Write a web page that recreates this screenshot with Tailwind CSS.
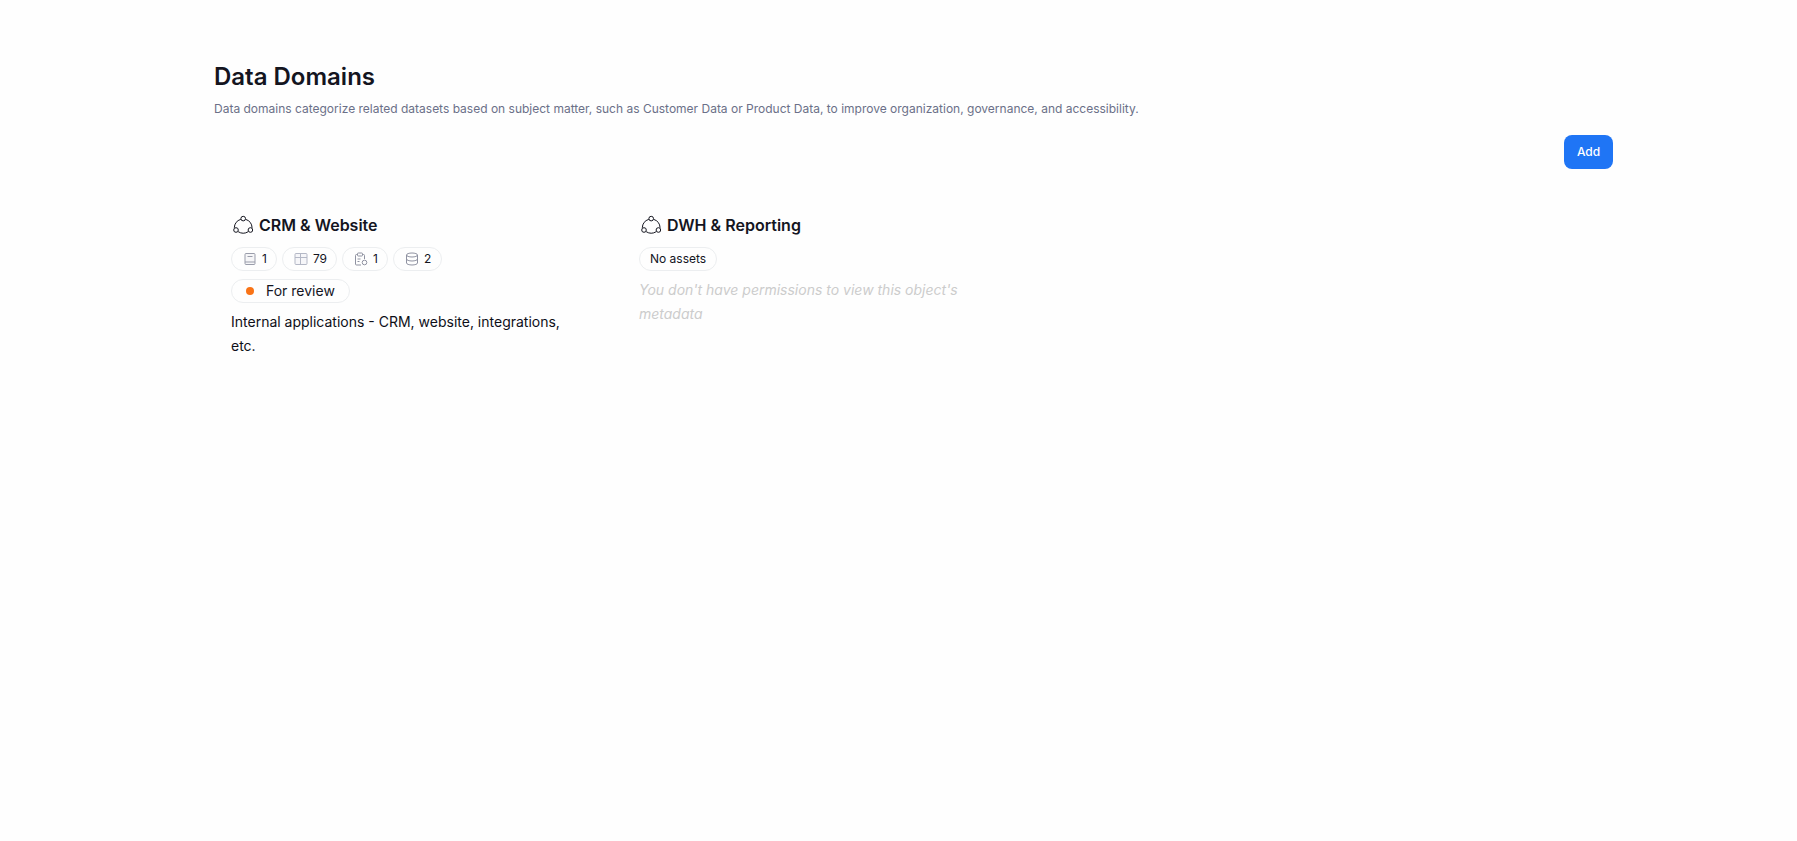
<!DOCTYPE html>
<html lang="en">
<head>
  <meta charset="UTF-8" />
  <title>Data Domains</title>
  <script src="https://cdn.jsdelivr.net/npm/@tailwindcss/browser@4"></script>
</head>
<body class="bg-[#fefefe] font-['Inter',sans-serif] min-h-screen">
  <div class="pl-[214px] pr-[184px] pt-[62px]">
    <h1 class="text-2xl leading-[30px] font-semibold text-[#14151f]">Data Domains</h1>
    <p class="mt-[7px] text-xs leading-[20px] text-[#6b7088]">Data domains categorize related datasets based on subject matter, such as Customer Data or Product Data, to improve organization, governance, and accessibility.</p>
    <div class="flex justify-end mt-[16px]">
      <button class="bg-[#1f75f5] text-white text-xs font-medium h-[34px] w-[49px] rounded-lg">Add</button>
    </div>

    <div class="flex mt-[42px]">
      <!-- CRM & Website -->
      <div class="w-[408px] pl-[17px] pr-[60px] mr-[17px]">
        <div class="flex items-center gap-[6px] h-[28px]">
          <svg class="w-[22px] h-[21px]" viewBox="0 0 22 21" fill="none" stroke="#14151f" stroke-width="1"><circle cx="12.200" cy="3.600" r="2.300"/><circle cx="5" cy="15" r="2.300"/><circle cx="19.400" cy="15" r="2.300"/><path d="M9.800 4.300A9.500 9.500 0 0 0 3.300 12.800M14.600 4.300A9.500 9.500 0 0 1 21.100 12.800M7.200 16.700A9.500 9.500 0 0 0 17.200 16.700"/></svg>
          <span class="text-base font-semibold text-[#14151f]">CRM &amp; Website</span>
        </div>
        <div class="flex gap-[5px] mt-[8px]">
          <span class="flex items-center gap-[5px] h-6 pl-[11px] pr-[9px] rounded-full border border-[#eceef0] text-xs text-[#14151f]">
            <svg class="w-[14px] h-[14px]" viewBox="0 0 14 14" fill="none" stroke="#9a9dab"><rect x="2" y="1.500" width="10" height="11" rx="1" fill="#f6f6f8"/><path d="M2 10h10M4.500 4.500h5"/></svg>1</span>
          <span class="flex items-center gap-[5px] h-6 pl-[11px] pr-[9px] rounded-full border border-[#eceef0] text-xs text-[#14151f]">
            <svg class="w-[14px] h-[14px]" viewBox="0 0 14 14" fill="none" stroke="#b4b8c6"><rect x="1" y="1.500" width="12" height="11" rx="1" fill="#f6f6f9"/><path d="M1 5.500h12M6.500 1.500v11"/></svg>79</span>
          <span class="flex items-center gap-[5px] h-6 pl-[11px] pr-[9px] rounded-full border border-[#eceef0] text-xs text-[#14151f]">
            <svg class="w-[14px] h-[14px]" viewBox="0 0 14 14" fill="none" stroke="#8f92a1"><path d="M3.500 2.500h-1a1 1 0 0 0-1 1v8.500a1 1 0 0 0 1 1H7M8.500 2.500h1a1 1 0 0 1 1 1V7"/><rect x="3.500" y="1" width="5" height="3" rx=".8"/><path d="M3.500 7h3M3.500 9.500h2"/><circle cx="10.500" cy="10.500" r="2.300"/></svg>1</span>
          <span class="flex items-center gap-[5px] h-6 pl-[11px] pr-[10px] rounded-full border border-[#eceef0] text-xs text-[#14151f]">
            <svg class="w-[14px] h-[14px]" viewBox="0 0 14 14" fill="none" stroke="#8f92a1"><ellipse cx="7" cy="3" rx="5.500" ry="2"/><path d="M1.500 3v8c0 1.100 2.500 2 5.500 2s5.500-.9 5.500-2V3M1.500 7c0 1.100 2.500 2 5.500 2s5.500-.9 5.500-2"/></svg>2</span>
        </div>
        <div class="mt-2 flex items-center gap-[12px] w-fit h-6 pl-[14px] pr-[14px] rounded-full border border-[#eceef0] text-sm text-[#14151f]">
          <span class="w-2 h-2 rounded-full bg-[#f97316]"></span>For review
        </div>
        <p class="mt-[7px] text-sm leading-[24px] text-[#0e0f18]">Internal applications - CRM, website, integrations, etc.</p>
      </div>

      <!-- DWH & Reporting -->
      <div class="w-[408px] pr-[60px]">
        <div class="flex items-center gap-[6px] h-[28px]">
          <svg class="w-[22px] h-[21px]" viewBox="0 0 22 21" fill="none" stroke="#14151f" stroke-width="1"><circle cx="12.200" cy="3.600" r="2.300"/><circle cx="5" cy="15" r="2.300"/><circle cx="19.400" cy="15" r="2.300"/><path d="M9.800 4.300A9.500 9.500 0 0 0 3.300 12.800M14.600 4.300A9.500 9.500 0 0 1 21.100 12.800M7.200 16.700A9.500 9.500 0 0 0 17.200 16.700"/></svg>
          <span class="text-base font-semibold text-[#14151f]">DWH &amp; Reporting</span>
        </div>
        <div class="flex gap-1 mt-[8px]">
          <span class="flex items-center h-6 px-[10px] rounded-full border border-[#eceef0] text-xs text-[#14151f]">No assets</span>
        </div>
        <p class="mt-[7px] text-sm leading-[24px] italic text-[#cccccc]">You don't have permissions to view this object's metadata</p>
      </div>
    </div>
  </div>
</body>
</html>
